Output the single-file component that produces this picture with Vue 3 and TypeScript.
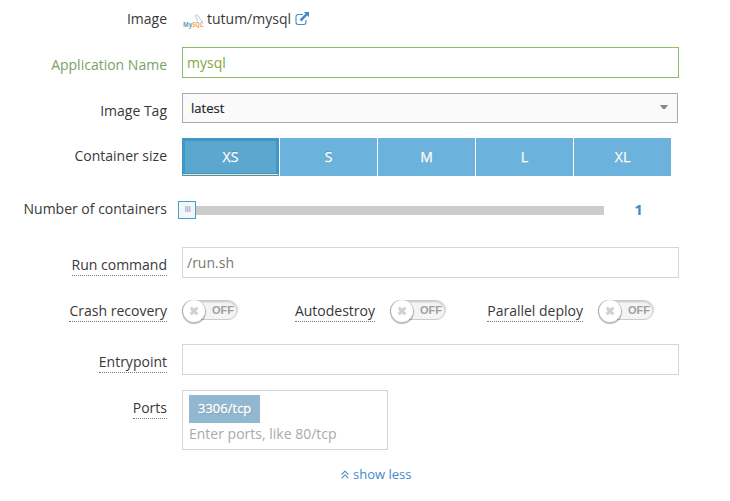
<script setup lang="ts">
import { ref } from 'vue'

const appName = ref('mysql')
const runCommand = ref('/run.sh')
const entrypoint = ref('')
const sizes: string[] = ['XS', 'S', 'M', 'L', 'XL']
const selected = ref('XS')
const count = ref(1)
const ports = ref<string[]>(['3306/tcp'])
const toggles = ref([
  { label: 'Crash recovery', on: false },
  { label: 'Autodestroy', on: false },
  { label: 'Parallel deploy', on: false },
])
</script>

<template>
  <form class="form" @submit.prevent>
    <div class="row image-row">
      <div class="label"><span>Image</span></div>
      <div class="image-value">
        <svg class="mysql-logo" width="22" height="16" viewBox="0 0 22 16">
          <path d="M12.200 2.200c2-.8 3.300.5 4.200 2.300.8 1.600 1.300 3 3.600 4.300l-1.500.3 2 1.700M12.500 2.400c.2 1.500 1 2 1.200 3.300.2 1 .4 1.700 1.200 2.200" fill="none" stroke="#9bbccf" stroke-width=".8" />
          <text class="logo-my" x="0" y="14.400" textLength="9.200" lengthAdjust="spacingAndGlyphs">My</text>
          <text class="logo-sql" x="9.200" y="14.400" textLength="11" lengthAdjust="spacingAndGlyphs">SQL</text>
        </svg>
        <span class="image-name">tutum/mysql</span>
        <svg class="external" width="14" height="14" viewBox="0 0 14 14">
          <path d="M8 2.500H3.200A2.200 2.200 0 0 0 1 4.700v5.600a2.200 2.200 0 0 0 2.200 2.200h5.600a2.200 2.200 0 0 0 2.200-2.200V8" fill="none" stroke="#428bca" stroke-width="1.100" />
          <path d="M8.800 0H14v5.200l-1.700-1.700-5.900 5.900-1.800-1.800 5.900-5.900z" fill="#428bca" />
        </svg>
      </div>
    </div>

    <div class="row name-row">
      <label class="label valid"><span>Application Name</span></label>
      <input v-model="appName" class="input valid" type="text" />
    </div>

    <div class="row tag-row">
      <div class="label"><span>Image Tag</span></div>
      <div class="select"><span>latest</span><i class="caret"></i></div>
    </div>

    <div class="row size-row">
      <div class="label"><span>Container size</span></div>
      <div class="sizes">
        <button v-for="s in sizes" :key="s" type="button" class="size" :class="{ active: s === selected }" @click="selected = s">{{ s }}</button>
      </div>
    </div>

    <div class="row count-row">
      <div class="label"><span>Number of containers</span></div>
      <div class="slider">
        <div class="handle"><i></i><i></i><i></i></div>
        <div class="track"></div>
        <div class="count">{{ count }}</div>
      </div>
    </div>

    <div class="row run-row">
      <label class="label"><span class="hint">Run command</span></label>
      <input v-model="runCommand" class="input" type="text" />
    </div>

    <div class="toggles">
      <div v-for="t in toggles" :key="t.label" class="toggle-cell">
        <div class="label"><span class="hint">{{ t.label }}</span></div>
        <div class="switch" @click="t.on = !t.on">
          <span class="knob">
            <svg width="10" height="10" viewBox="0 0 10 10"><path d="M1.700 1.700l6.600 6.600M8.300 1.700L1.700 8.300" stroke="#d2d2d2" stroke-width="3.200" /></svg>
          </span>
          <span class="state">{{ t.on ? 'ON' : 'OFF' }}</span>
        </div>
      </div>
    </div>

    <div class="row entry-row">
      <label class="label"><span class="hint">Entrypoint</span></label>
      <input v-model="entrypoint" class="input" type="text" />
    </div>

    <div class="row ports-row">
      <div class="label"><span class="hint">Ports</span></div>
      <div class="ports">
        <span v-for="p in ports" :key="p" class="chip">{{ p }}</span>
        <input class="port-input" type="text" placeholder="Enter ports, like 80/tcp" />
      </div>
    </div>

    <a class="less">
      <svg width="8" height="9" viewBox="0 0 8 9"><path d="M.6 4.500L4 1.200l3.400 3.300M.6 8.200L4 4.900l3.400 3.300" fill="none" stroke="#428bca" stroke-width="1.100" /></svg>
      <span>show less</span>
    </a>
  </form>
</template>

<style>
body {
  background: #fff;
}
</style>

<style scoped>
.form,
.form * {
  box-sizing: border-box;
}
.form {
  width: 730px;
  height: 501px;
  padding-top: 1px;
  overflow: hidden;
  font: 14px/20px 'Open Sans', sans-serif;
  color: #393939;
}
.row {
  display: grid;
  grid-template-columns: 167px 497px;
  column-gap: 15px;
  align-items: start;
}
.label {
  padding-top: 8px;
  text-align: right;
  white-space: nowrap;
}
.label.valid {
  color: #7ba065;
}
.hint {
  display: inline-block;
  height: 21px;
  border-bottom: 1px dotted #777;
}
.image-row { height: 46px; }
.name-row { height: 46px; }
.tag-row { height: 45px; }
.size-row { height: 53px; }
.count-row { height: 56px; }
.run-row { height: 46px; }
.entry-row { height: 46px; }
.ports-row { height: 60px; }

.image-value {
  display: flex;
  align-items: center;
  padding-top: 8px;
}
.mysql-logo {
  margin: 4px 2px 0 1px;
}
.mysql-logo text {
  font: bold 7px 'Open Sans', sans-serif;
}
.logo-my { fill: #6d9bb8; }
.logo-sql { fill: #f0a25a; }
.external {
  margin: -1px 0 0 4px;
}
.input {
  width: 497px;
  height: 31px;
  padding: 4px 4px 5px;
  border: 1px solid #d5d5d5;
  border-radius: 0;
  outline: 0;
  background: #fff;
  font: 14px/20px 'Open Sans', sans-serif;
  color: #777;
}
.input.valid {
  border-color: #8bbc67;
  color: #82a741;
}
.select {
  display: flex;
  justify-content: space-between;
  width: 496px;
  height: 30px;
  padding: 4px 9px 0 8px;
  border: 1px solid #aaa;
  background: #fafafa;
  font-size: 13px;
  color: #222;
  -webkit-text-stroke: 0.15px #222;
}
.caret {
  width: 8px;
  height: 4px;
  margin-top: 7px;
  background: #888;
  clip-path: polygon(0 0, 100% 0, 62% 100%, 38% 100%);
}
.sizes {
  display: flex;
  gap: 1px;
}
.size {
  width: 97px;
  height: 38px;
  padding: 0;
  border: 3px solid #6bb3dc;
  background: #6bb3dc;
  font: 14px/20px 'Open Sans', sans-serif;
  color: #fff;
  -webkit-text-stroke: 0.3px #fff;
  text-shadow: 0 -1px 0 rgba(0, 0, 0, 0.25);
}
.size.active {
  border-color: #3f97c9;
  background: #5ba7d0;
  position: relative;
}
.size.active::after {
  content: '';
  position: absolute;
  left: -2px;
  right: -2px;
  bottom: -2px;
  height: 1px;
  background: #ffe3a4;
}
.slider {
  display: flex;
  align-items: center;
  height: 20px;
  margin: 9px 0 0 -4px;
}
.handle {
  display: flex;
  justify-content: center;
  gap: 1px;
  width: 18px;
  height: 18px;
  padding-top: 4px;
  border: 1px solid #3fa2ca;
  background: #f5f5f5;
}
.handle i {
  width: 1px;
  height: 6px;
  background: #abc3df;
  box-shadow: 1px 0 0 #d9d5e3;
}
.track {
  width: 408px;
  height: 9px;
  background: #ccc;
}
.count {
  width: 69px;
  padding-bottom: 2px;
  text-align: center;
  font-size: 15px;
  font-weight: bold;
  color: #428bca;
}
.toggles {
  display: flex;
  height: 51px;
}
.toggle-cell {
  display: flex;
  gap: 15px;
  align-items: flex-start;
}
.toggle-cell .label {
  width: 167px;
}
.toggle-cell + .toggle-cell .label {
  width: 137px;
}
.switch {
  display: flex;
  width: 56px;
  height: 20px;
  margin-top: 7px;
  border: 1px solid #ccc;
  border-radius: 10px;
  background: #f4f4f4;
  box-shadow: inset 0 1px 2px rgba(0, 0, 0, 0.2);
}
.knob {
  display: flex;
  align-items: center;
  justify-content: center;
  flex: none;
  width: 22px;
  height: 22px;
  margin: -1px 0 0 0;
  border-radius: 50%;
  background: #fff;
  box-shadow: 0 1px 1px 1px rgba(0, 0, 0, 0.27);
}
.state {
  padding-left: 7px;
  font: bold 11px/18px 'Liberation Sans', sans-serif;
  color: #a0a0a0;
}
.ports {
  display: flex;
  flex-direction: column;
  align-items: flex-start;
  width: 206px;
  height: 60px;
  padding: 4px 6px;
  border: 1px solid #d5d5d5;
}
.chip {
  height: 28px;
  padding: 3px 9px 5px;
  background: #91b8d0;
  font-size: 13px;
  color: #fff;
  -webkit-text-stroke: 0.3px #fff;
  text-shadow: 1px 1px 1px rgba(0, 0, 0, 0.15);
}
.port-input {
  width: 192px;
  height: 20px;
  margin-top: 1px;
  padding: 0;
  border: 0;
  outline: 0;
  font: 14px/20px 'Open Sans', sans-serif;
}
.port-input::placeholder {
  color: #aaa;
  opacity: 1;
}
.less {
  display: flex;
  align-items: center;
  gap: 4px;
  margin: 14px 0 0 341px;
  font-size: 13px;
  color: #428bca;
}
</style>
